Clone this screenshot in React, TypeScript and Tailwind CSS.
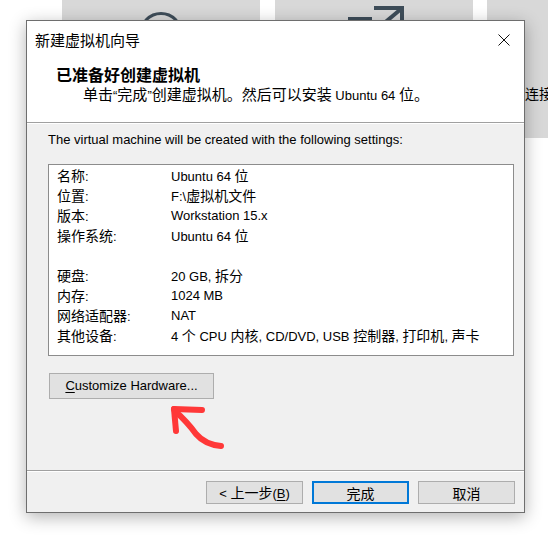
import React from "react";

const CJK = /([\u2E80-\u9FFF\u3000-\u303F\uFF00-\uFFEF]+)/;

function Mixed({ text, cjk }: { text: string; cjk: string }) {
  const parts = text.split(CJK);
  return (
    <>
      {parts.map((p, i) =>
        i % 2 === 1 ? (
          <span key={i} className={cjk}>
            {p}
          </span>
        ) : (
          <span key={i}>{p}</span>
        )
      )}
    </>
  );
}

const rows: [string, string][] = [
  ["名称:", "Ubuntu 64 位"],
  ["位置:", "F:\\虚拟机文件"],
  ["版本:", "Workstation 15.x"],
  ["操作系统:", "Ubuntu 64 位"],
  ["", ""],
  ["硬盘:", "20 GB, 拆分"],
  ["内存:", "1024 MB"],
  ["网络适配器:", "NAT"],
  ["其他设备:", "4 个 CPU 内核, CD/DVD, USB 控制器, 打印机, 声卡"],
];

export default function App() {
  return (
    <div className="relative w-[548px] h-[541px] overflow-hidden bg-white font-['Liberation_Sans','Noto_Sans_CJK_SC',sans-serif] text-black">
      {/* background home tiles */}
      <div className="flex pl-[62px]">
        <div className="w-[198px] h-[138px] shrink-0 bg-[#d8d8d8] flex flex-col items-center pt-[11px]">
          <svg width="46" height="46" viewBox="0 0 46 46">
            <circle cx="23" cy="23" r="20.5" fill="none" stroke="#3e4d59" strokeWidth="3" />
          </svg>
        </div>
        <div className="ml-[15px] w-[198px] h-[138px] shrink-0 bg-[#d8d8d8] pl-[70px]">
          <svg width="62" height="40" viewBox="0 0 62 40">
            <path d="M3 19 H27" stroke="#3e4d59" strokeWidth="4" fill="none" />
            <path d="M29 8 H57 V36" stroke="#3e4d59" strokeWidth="4" fill="none" />
            <path d="M31 30 L56 9" stroke="#3e4d59" strokeWidth="4" fill="none" />
          </svg>
        </div>
        <div className="ml-[14px] w-[198px] h-[138px] shrink-0 bg-[#d8d8d8] pl-[38px] pt-[82px] overflow-hidden">
          <span className="text-[14px] leading-[20px] whitespace-nowrap font-['Noto_Sans_CJK_SC',sans-serif]">
            连接远程服务器
          </span>
        </div>
      </div>

      {/* dialog window */}
      <div className="absolute left-[26px] top-[20px] w-[499px] h-[493px] border border-[#6e6e6e] bg-[#f0f0f0] flex flex-col shadow-[0_4px_16px_rgba(0,0,0,0.3)]">
        {/* title bar */}
        <div className="h-[38px] shrink-0 bg-white flex items-center justify-between pl-[8px] pr-[14px]">
          <span className="text-[15px] leading-[20px] font-['Noto_Sans_CJK_SC',sans-serif]">
            新建虚拟机向导
          </span>
          <svg width="12" height="12" viewBox="0 0 12 12">
            <path d="M0.5 0.5 L11.5 11.5 M11.5 0.5 L0.5 11.5" stroke="#111" strokeWidth="1" />
          </svg>
        </div>
        {/* header */}
        <div className="h-[63px] shrink-0 bg-white pt-[5px]">
          <div className="pl-[29px] text-[16px] leading-[20px] font-bold font-['Noto_Sans_CJK_SC',sans-serif]">
            已准备好创建虚拟机
          </div>
          <div className="pl-[56px] mt-[1px] text-[13px] leading-[20px] whitespace-nowrap">
            <Mixed text="单击“完成”创建虚拟机。然后可以安装 Ubuntu 64 位。" cjk="text-[15px]" />
          </div>
        </div>
        <div className="h-px shrink-0 bg-[#a0a0a0]" />
        <div className="h-px shrink-0 bg-white" />

        {/* body */}
        <div className="flex-1 flex flex-col pl-[21px] pr-[10px] pt-[8px]">
          <div className="text-[13px] leading-[16px] whitespace-nowrap">
            The virtual machine will be created with the following settings:
          </div>
          <div className="mt-[16px] h-[192px] border border-[#8c8c8c] bg-white pt-[1px] pl-[8px]">
            {rows.map(([k, v], i) => (
              <div key={i} className="flex h-[20px] items-center text-[13px] leading-[20px] whitespace-nowrap">
                <div className="w-[114px] shrink-0">
                  <Mixed text={k} cjk="text-[14px]" />
                </div>
                <div>
                  <Mixed text={v} cjk="text-[14px]" />
                </div>
              </div>
            ))}
          </div>
          <div className="mt-[17px] ml-px w-[165px] h-[26px] border border-[#adadad] bg-[#e1e1e1] flex items-center justify-center text-[13px] leading-[16px]">
            <span>
              <span className="underline underline-offset-2">C</span>ustomize Hardware...
            </span>
          </div>
        </div>

        <div className="h-px shrink-0 bg-[#a0a0a0]" />
        <div className="h-px shrink-0 bg-white" />

        {/* footer */}
        <div className="h-[40px] shrink-0 flex justify-end gap-[9px] pr-[9px] pt-[9px]">
          <div className="w-[97px] h-[23px] border border-[#adadad] bg-[#e1e1e1] flex items-center justify-center text-[13px] leading-[16px]">
            <span>
              &lt; <span className="text-[14px] font-['Noto_Sans_CJK_SC',sans-serif]">上一步</span>(
              <span className="underline underline-offset-2">B</span>)
            </span>
          </div>
          <div className="w-[97px] h-[23px] border-2 border-[#0078d7] bg-[#e1e1e1] flex items-center justify-center text-[14px] leading-[16px] font-['Noto_Sans_CJK_SC',sans-serif]">
            完成
          </div>
          <div className="w-[97px] h-[23px] border border-[#adadad] bg-[#e1e1e1] flex items-center justify-center text-[14px] leading-[16px] font-['Noto_Sans_CJK_SC',sans-serif]">
            取消
          </div>
        </div>
      </div>

      {/* red annotation arrow */}
      <svg
        className="absolute left-0 top-0 pointer-events-none"
        width="548"
        height="541"
        viewBox="0 0 548 541"
      >
        <g stroke="#ff3838" strokeWidth="6" strokeLinecap="round" strokeLinejoin="round" fill="none">
          <path d="M174 409 L202 410" />
          <path d="M174 409 L176 431" />
          <path d="M175 411 C 184 419, 191 427, 196 434 C 202 441, 210 445, 221 446" />
        </g>
      </svg>
    </div>
  );
}
